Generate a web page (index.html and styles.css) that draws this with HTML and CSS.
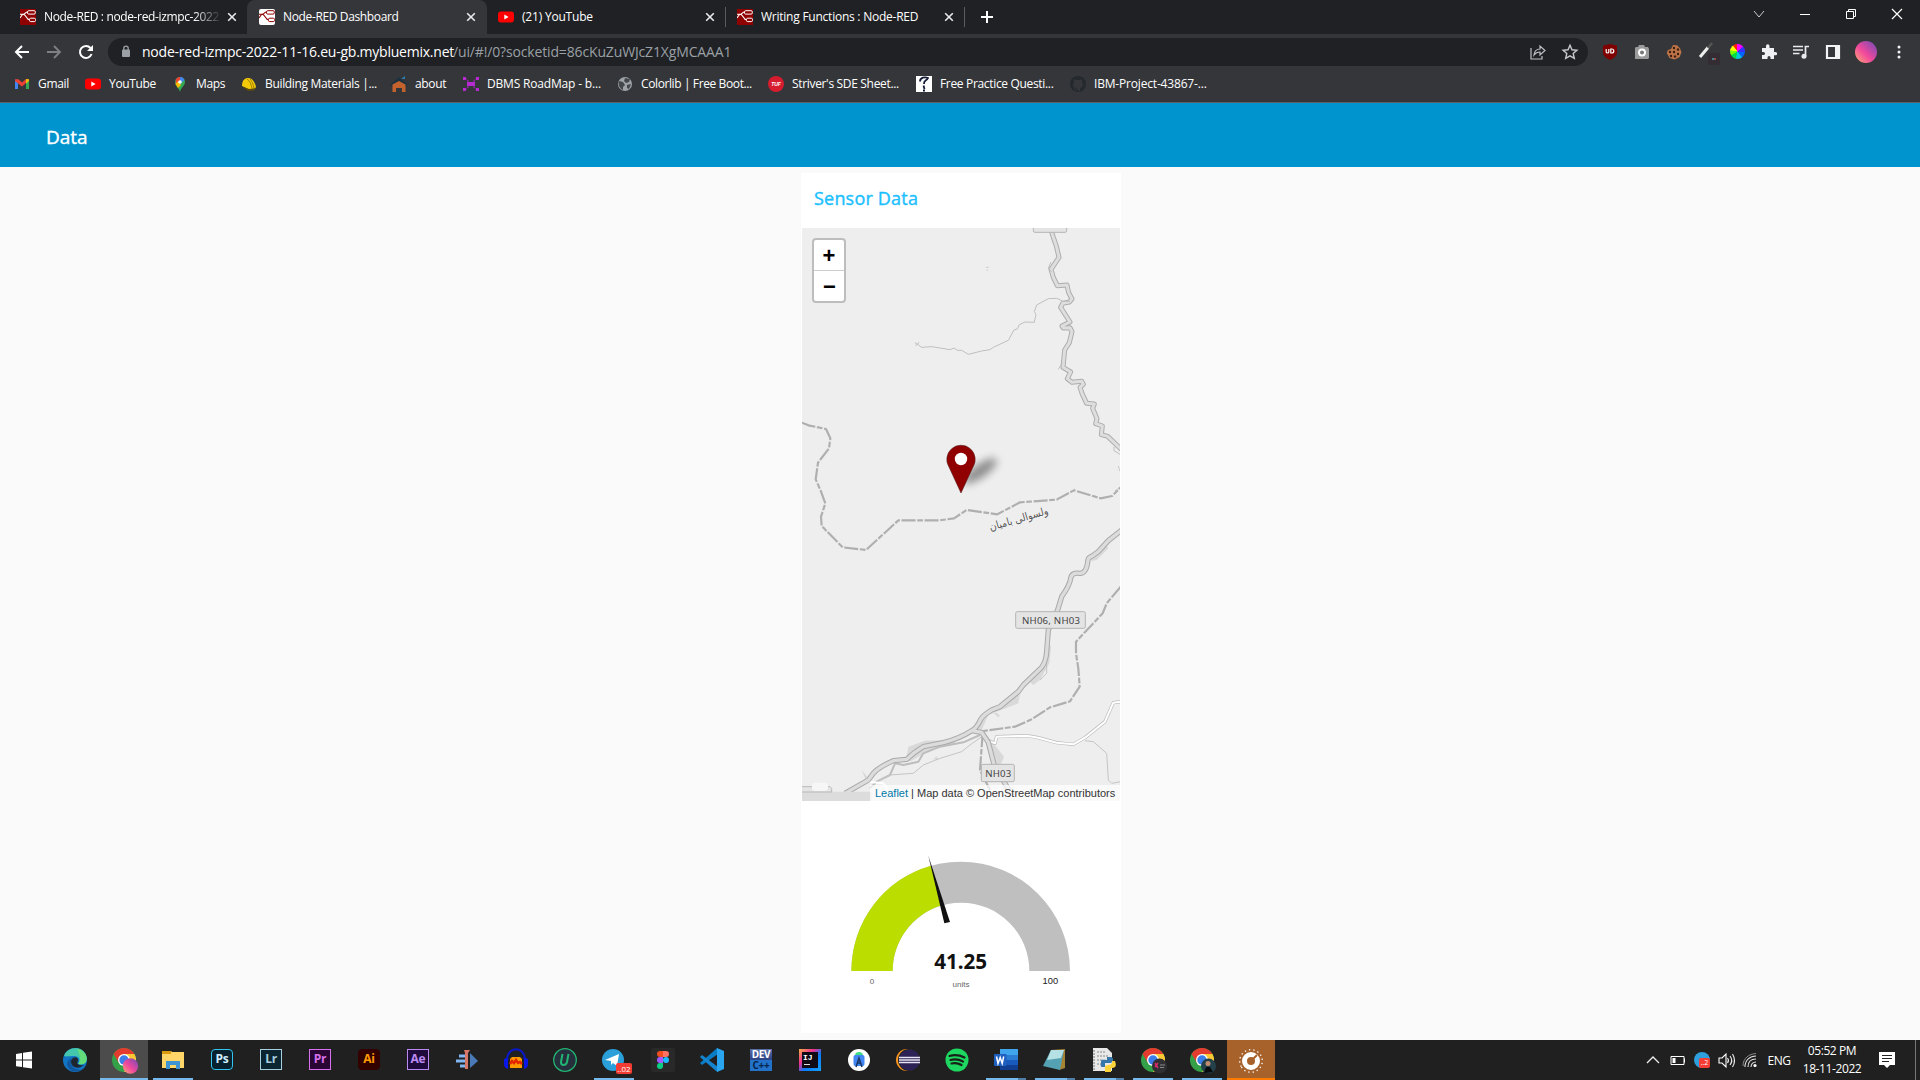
FILE: index.html
```html
<!DOCTYPE html>
<html lang="en">
<head>
<meta charset="utf-8">
<title>Node-RED Dashboard</title>
<link rel="stylesheet" href="styles.css">
</head>
<body>
<svg class="defs" aria-hidden="true">
  <symbol id="nodered" viewBox="0 0 16 16">
    <path d="M0 5.2h3.2c2 0 2.2-2.2 4.3-2.2M3 5.2c3.6 0 3 5.600 6.500 5.600M0 9l2.500-3.500" fill="none" stroke="currentColor" stroke-width="1.100"/>
    <rect x="7.500" y="1.700" width="7.800" height="3.400" rx="1.200" fill="none" stroke="currentColor"/>
    <rect x="9.500" y="9.200" width="6" height="3.400" rx="1.200" fill="none" stroke="currentColor"/>
  </symbol>
  <symbol id="youtube" viewBox="0 0 16 16"><rect y="2.500" width="16" height="11" rx="3" fill="#f00"/><path d="M6.300 5.500v5l4.300-2.500z" fill="#fff"/></symbol>
  <symbol id="close" viewBox="0 0 16 16"><path d="M4.200 4.200l7.600 7.600M11.800 4.200l-7.600 7.600" stroke="#e8eaed" stroke-width="1.600"/></symbol>
  <symbol id="chrome" viewBox="0 0 24 24">
    <circle cx="12" cy="12" r="12" fill="#34a047"/>
    <path d="M12 6h10.400A12 12 0 0 1 12 24l5.200-9z" fill="#fcc934"/>
    <path d="M1.600 6A12 12 0 0 1 22.400 6H12L7 15z" fill="#e33b2e"/>
    <circle cx="12" cy="12" r="6" fill="#fff"/><circle cx="12" cy="12" r="4.700" fill="#3b7de9"/>
  </symbol>
  <linearGradient id="pink" x1="0" y1="1" x2="1" y2="0"><stop offset="0" stop-color="#ffab72"/><stop offset=".45" stop-color="#f0489c"/><stop offset="1" stop-color="#6a4bb8"/></linearGradient>
</svg>

<header class="tabstrip">
  <div class="tab first"><svg class="fav red"><use href="#nodered"/></svg><span class="title fade">Node-RED : node-red-izmpc-2022</span><svg class="x"><use href="#close"/></svg></div>
  <div class="tab active"><svg class="fav white"><use href="#nodered"/></svg><span class="title">Node-RED Dashboard</span><svg class="x"><use href="#close"/></svg></div>
  <div class="tab third"><svg class="fav"><use href="#youtube"/></svg><span class="title yt">(21) YouTube</span><svg class="x"><use href="#close"/></svg></div>
  <div class="tab fourth"><svg class="fav red"><use href="#nodered"/></svg><span class="title wide">Writing Functions : Node-RED</span><svg class="x"><use href="#close"/></svg></div>
  <svg class="plus" viewBox="0 0 14 14"><path d="M7 1v12M1 7h12" stroke="#fff" stroke-width="2"/></svg>
  <div class="winctl">
    <svg viewBox="0 0 12 12"><path d="M1 3l5 6 5-6" fill="none" stroke="#ccc"/></svg>
    <svg viewBox="0 0 12 12"><path d="M1 6.500h10" stroke="#fff"/></svg>
    <svg viewBox="0 0 12 12"><path d="M1.500 3.500h7v7h-7zM3.500 3.500v-2h7v7h-2" fill="none" stroke="#fff"/></svg>
    <svg viewBox="0 0 12 12"><path d="M1 1l10 10M11 1L1 11" stroke="#fff" stroke-width="1.200"/></svg>
  </div>
</header>

<div class="toolbar">
  <nav class="nav">
    <svg viewBox="0 0 16 16"><path d="M15 8H2M8 2L2 8l6 6" fill="none" stroke="#fff" stroke-width="2"/></svg>
    <svg viewBox="0 0 16 16"><path d="M1 8h13M8 2l6 6-6 6" fill="none" stroke="#7f8084" stroke-width="1.800"/></svg>
    <svg viewBox="0 0 16 16"><path d="M13.600 10A6 6 0 1 1 12.500 4" fill="none" stroke="#fff" stroke-width="2"/><path d="M15 1v6H9z" fill="#fff"/></svg>
  </nav>
  <div class="omnibox">
    <svg class="lock" viewBox="0 0 10 13"><rect x="1" y="4.500" width="8" height="7.500" rx="1" fill="#9aa0a6"/><path d="M2.800 5V3.300a2.200 2.200 0 0 1 4.400 0V5" fill="none" stroke="#9aa0a6" stroke-width="1.300"/></svg>
    <span class="host">node-red-izmpc-2022-11-16.eu-gb.mybluemix.net</span><span class="path">/ui/#!/0?socketid=86cKuZuWJcZ1XgMCAAA1</span>
    <svg class="share" viewBox="0 0 16 16"><path d="M1 4v11h11v-3M4 11c.5-4 3-6 6-6V2l5 4.500L10 11V8c-3 0-4.500 1-6 3z" fill="none" stroke="#bdc1c6" stroke-width="1.200"/></svg>
    <svg class="star" viewBox="0 0 16 16"><path d="M8 1.300l2 4.500 4.900.5-3.700 3.200 1.100 4.900L8 11.800l-4.300 2.600 1.100-4.900L1.100 6.300 6 5.800z" fill="none" stroke="#c6c9cd" stroke-width="1.400"/></svg>
  </div>
  <div class="ext">
    <svg viewBox="0 0 16 16"><path d="M8 0l7 1.800V8c0 4-3 6-7 8-4-2-7-4-7-8V1.800z" fill="#800000"/><path d="M4.200 5v3c0 1.300 2.600 1.300 2.600 0V5M8.800 5v4h1a1.900 1.900 0 0 0 0-4z" fill="none" stroke="#fff" stroke-width="1.200"/></svg>
    <svg viewBox="0 0 16 16"><path d="M2 3h2l1-2h5l1 2h3l1 2v9l-1 1H1V4z" fill="#9b9b9b"/><circle cx="8" cy="8.500" r="3" fill="#777" stroke="#fff" stroke-width="2"/></svg>
    <svg viewBox="0 0 16 16"><path d="M7 1l4 .2 3 3 1.500 4-2 5-5 2.300-5-1.500L.7 9 2 6l3-1z" fill="#bd7348"/><g fill="#3b1e11"><circle cx="8" cy="4" r="1.200"/><circle cx="12" cy="5.500" r="1.200"/><circle cx="4" cy="8" r="1.200"/><circle cx="8" cy="8" r="1.200"/><circle cx="12" cy="10" r="1.200"/><circle cx="5" cy="12" r="1.200"/><circle cx="9" cy="12.500" r="1.200"/></g></svg>
    <svg class="picker" viewBox="0 0 22 24"><path d="M2 14L10 4.500" stroke="#eee" stroke-width="3"/><path d="M10 5l4-5" stroke="#555" stroke-width="2.500"/><rect x="10" y="10" width="12" height="12" rx="2" fill="#332d33"/><path d="M14 16h2" stroke="#5de"/><path d="M16 16h2" stroke="#f66"/></svg>
    <i class="wheel"></i>
    <svg viewBox="0 0 16 16"><path d="M1 4h4V2a1.700 1.700 0 0 1 3.500 0v2H13v4h1.500a1.600 1.600 0 0 1 0 3.300H13V15H9.500v-1.500a1.500 1.500 0 0 0-3 0V15H1v-4h1.500a1.500 1.500 0 0 0 0-3H1z" fill="#eef0f3"/></svg>
    <svg viewBox="0 0 16 16"><path d="M0 2.500h10M0 6h10M0 9.500h6.500M12.500 12V2.500H16" fill="none" stroke="#e8eaed" stroke-width="1.700"/><circle cx="11" cy="12.200" r="2.500" fill="#e8eaed"/></svg>
    <svg viewBox="0 0 16 16"><path d="M2 2h12v12H2z" fill="none" stroke="#f1f3f4" stroke-width="2.200"/><path d="M10 2h4v12h-4z" fill="#f1f3f4"/></svg>
    <svg class="avatar" viewBox="0 0 22 22"><circle cx="11" cy="11" r="11" fill="url(#pink)"/></svg>
    <svg viewBox="0 0 16 16"><g fill="#f1f3f4"><circle cx="8" cy="3" r="1.500"/><circle cx="8" cy="8" r="1.500"/><circle cx="8" cy="13" r="1.500"/></g></svg>
  </div>
</div>

<nav class="bookmarks">
  <a><svg viewBox="0 0 16 16"><path d="M1 3v10h3V7z" fill="#4285f4"/><path d="M12 7v6h3V3z" fill="#34a853"/><path d="M1 3.500l3-.5 4 3.500L12 3v4l-4 3.500L1 5z" fill="#ea4335"/><path d="M12 3l3 .2V5l-3 2.500z" fill="#fbbc04"/></svg><span>Gmail</span></a>
  <a><svg><use href="#youtube"/></svg><span>YouTube</span></a>
  <a><svg viewBox="0 0 16 16"><path d="M3 6a5 5 0 0 1 10 0c0 4-4 5-5 10-1-4-5-6-5-10z" fill="#34a853"/><path d="M3.500 8L11 2A5 5 0 0 0 4 3z" fill="#ea4335"/><path d="M8 1a5 5 0 0 1 4.500 3L8 8z" fill="#4285f4"/><path d="M3.500 8L6 5l3 4-3 3z" fill="#fbbc04"/><circle cx="8" cy="6" r="1.800" fill="#fff"/></svg><span>Maps</span></a>
  <a><svg viewBox="0 0 16 16"><path d="M1 10C1 4 4 2 7 2c5 0 7 5 8 9l-2 3-6-1z" fill="#f5cb08"/><path d="M0 10l8 3 7-1-2 2.500-6 .5z" fill="#5b4b10"/><path d="M6 3c3 2 4 5 5 9M9 3c2 2 3 5 4 9" fill="none" stroke="#a08000"/></svg><span>Building Materials |...</span></a>
  <a><svg viewBox="0 0 16 16"><path d="M0 8l8-7 8 7v2H0z" fill="#1c323f"/><path d="M1.500 8.500L8 5l6.500 3.500V16h-3.500v-4H5v4H1.500z" fill="#c3622d"/><path d="M10 3l4-3v3z" fill="#2c7db0"/></svg><span>about</span></a>
  <a><svg viewBox="0 0 16 16"><path d="M2 2l4 4M14 2l-4 4M2 14l4-4M14 14l-4-4" stroke="#8e2ba3" stroke-width="1.500" stroke-dasharray="2 1"/><path d="M4 6h8v4H4zM0 1h3v3H0zM13 1h3v3h-3zM0 12h3v3H0zM13 12h3v3h-3z" fill="#b52bd0"/></svg><span class="loose">DBMS RoadMap - b...</span></a>
  <a><svg viewBox="0 0 16 16"><circle cx="8" cy="8" r="7" fill="#9ea3a8"/><path d="M2 5l4 1 2 3-2 2v3C3 13 1 9 2 5zM8 2l5 1-1 3-3 1-2-2zM10 9l4-1-2 5-2-1z" fill="#44474b"/></svg><span class="tight">Colorlib | Free Boot...</span></a>
  <a><svg viewBox="0 0 16 16"><circle cx="8" cy="8" r="8" fill="#d71c2f"/><text x="8" y="10" class="tuf">TUF</text></svg><span>Striver's SDE Sheet...</span></a>
  <a><svg viewBox="0 0 16 16"><path d="M0 0h16v16H0z" fill="#fff"/><path d="M4 5.500c0-4 5-5 8-3.500-1 3-4.500 2-4 6M7.500 9.500L8.500 13M7 14.500h2" fill="none" stroke="#151b36" stroke-width="1.800"/></svg><span>Free Practice Questi...</span></a>
  <a><svg viewBox="0 0 16 16"><circle cx="8" cy="8" r="8" fill="#24292e"/><path d="M6 16v-3c-2 0-2-2-3-2M6 12c-4-1-3-4-2-6V3l2.500 1h3L12 3v3c1 2 2 5-2 6v4z" fill="#35363a"/></svg><span class="loose">IBM-Project-43867-...</span></a>
</nav>

<div class="appbar"><h1>Data</h1></div>

<main class="page">
  <section class="card">
    <h2>Sensor Data</h2>
    <div class="map">
      <svg class="tiles" viewBox="0 0 318 573">
        <rect width="318" height="573" fill="#eee"/>
        <g transform="translate(-12 -68) scale(.33333)" fill="none" stroke-linejoin="round">
          <path stroke="#adadad" stroke-width="15" d="M783 210L790 232 799 258 807 292 783 328 790 352 802 377 831 375 836 398 846 417 838 426 818 430 812 442 840 486 816 498 820 504 840 503 846 515 838 548 824 570 819 622 842 636 832 656 846 667 875 664 880 673 870 682 876 700 890 730 913 732 908 745 921 776 917 791 937 798 934 824 953 829 1000 874"/>
          <path stroke="#dedede" stroke-width="9" d="M783 210L790 232 799 258 807 292 783 328 790 352 802 377 831 375 836 398 846 417 838 426 818 430 812 442 840 486 816 498 820 504 840 503 846 515 838 548 824 570 819 622 842 636 832 656 846 667 875 664 880 673 870 682 876 700 890 730 913 732 908 745 921 776 917 791 937 798 934 824 953 829 1000 874"/>
          <path stroke="#bfbfbf" stroke-width="3" d="M840 424L820 424 800 415 775 416 740 435 733 455 738 463 733 487 705 486 688 494 682 507 672 510 655 541 610 562 600 569 575 573 535 583 515 571 502 571 492 564 480 569 425 560 395 562 375 548M376 557l12-10M783 306l-8 18 10 12M805 628l12-20M972 860l0 12 20 12"/>
          <path stroke="#c9c9c9" stroke-width="3" d="M588 322l8 0M590 331l4-1M985 918l5 16M850 990l4-3M975 992l15-8"/>
          <path stroke="#afafaf" stroke-width="6.500" stroke-dasharray="42 5 17 5" d="M36 788L55 796 108 807 121 835 117 865 84 908 77 958 92 992 106 1030 93 1070 95 1098 158 1162 228 1170 325 1081 450 1081 492 1075 530 1050 622 1063 690 1027 800 1019 852 991 932 1015 966 1008 992 982"/>
          <path d="M730 200v12q0 5 5 5h90q5 0 5-5v-12z" fill="#e4e4e4" stroke="#b5b5b5" stroke-width="3"/>
        </g>
        <g transform="translate(-12 252) scale(.33333)" fill="none" stroke-linejoin="round">
          <path fill="#d9d9d9" d="M350 830l5-30 50-18 75-2 20 10-80 20-60 35zM560 745l20-30 50-35 60-40-5 30-90 35-20 45zM580 765l30 25 32 40-8 20-26 15zM768 480l15 20-5 50-28 50-20 15-10-8 42-50zM610 700l12-2 8 10-5 4zM900 230l50-35 5 10-35 35-15 3zM430 838l10-10 5 12zM215 870l20 25-8 4z"/>
          <path stroke="#bdbdbd" stroke-width="6" d="M570 765L520 787 450 800 400 820 385 845 340 855 315 850 300 885 260 905 240 925"/>
          <path stroke="#c4c4c4" stroke-width="3" d="M575 770L540 795 515 815 450 835 400 855 370 880 300 885 260 905M885 782L910 785 950 820 955 900 965 910 992 905M770 540v40l-20 20"/>
          <path stroke="#afafaf" stroke-width="6.500" stroke-dasharray="42 5 17 5" d="M992 320L950 370 938 400 858 485 858 520 865 565 869 620 840 664 780 682 725 718 675 740 580 753M578 760L570 870 600 930"/>
          <path stroke="#bcbcbc" stroke-width="10" d="M992 665L970 668 945 725 885 773 850 793 800 788 745 773 710 767 620 770 615 790 595 782"/>
          <path stroke="#fff" stroke-width="6" d="M992 665L970 668 945 725 885 773 850 793 800 788 745 773 710 767 620 770 615 790 595 782M235 905l45 5 15 22"/>
          <path stroke="#a9a9a9" stroke-width="16" d="M995 150L955 182 925 215 905 229Q895 232 894 240Q890 280 870 280Q845 276 842 295Q840 315 815 350L803 390 775 450 770 515Q768 545 755 562L700 615 685 635 630 680 605 690Q580 705 572 718Q560 745 545 752Q510 775 460 788L400 800Q370 818 350 838L310 842Q265 862 250 880L235 900 165 940M545 752l30 5 20 30 18 70 45 75"/>
          <path stroke="#dcdcdc" stroke-width="10" d="M995 150L955 182 925 215 905 229Q895 232 894 240Q890 280 870 280Q845 276 842 295Q840 315 815 350L803 390 775 450 770 515Q768 545 755 562L700 615 685 635 630 680 605 690Q580 705 572 718Q560 745 545 752Q510 775 460 788L400 800Q370 818 350 838L310 842Q265 862 250 880L235 900 165 940M545 752l30 5 20 30 18 70 45 75"/>
          <path fill="#dcdcdc" d="M36 935h210v40H36z"/>
          <path fill="#e4e4e4" stroke="#b9b9b9" stroke-width="3" d="M30 920h90l5 5v11H30z"/>
          <rect x="66" y="908" width="48" height="25" rx="9" fill="#f6f6f6"/>
          <g fill="#e4e4e4" stroke="#b4b4b4" stroke-width="3"><rect x="677" y="395" width="209" height="50" rx="5"/><rect x="574" y="853" width="99" height="52" rx="5"/></g>
          <g class="shield"><text x="783" y="431" textLength="174">NH06, NH03</text><text x="625" y="890" textLength="78">NH03</text></g>
          <text class="arabic" transform="translate(689 127) rotate(-16)" textLength="182" lengthAdjust="spacingAndGlyphs">ولسوالی بامیان</text>
        </g>
        <g class="marker">
          <ellipse class="shadow" cx="178" cy="243" rx="20" ry="6.500" transform="rotate(-35 178 243)"/>
          <path d="M159 265L147 239a14.200 14.200 0 1 1 24 0z" fill="#900000" stroke="#5a2020" stroke-width=".6"/>
          <circle cx="159" cy="231" r="6.200" fill="#fff"/>
        </g>
      </svg>
      <div class="zoomctl"><b>+</b><b>−</b></div>
      <div class="credit"><a>Leaflet</a> | Map data © OpenStreetMap contributors</div>
    </div>
    <svg class="gauge" viewBox="36 3 954 693">
      <path d="M184 513A328 328 0 0 1 840 513H718A205 205 0 0 0 308 513z" fill="#bfbfbf"/>
      <path d="M184 513A328 328 0 0 1 423 197L456 316A205 205 0 0 0 308 513z" fill="#bd0"/>
      <path d="M415 167L480 366 463 370z" fill="#111"/>
      <text class="value" x="512" y="507" textLength="158">41.25</text>
      <text class="lim" x="246" y="552">0</text>
      <text class="lim max" x="781" y="552">100</text>
      <text class="lim" x="513" y="560">units</text>
    </svg>
  </section>
</main>

<footer class="taskbar">
  <div class="apps">
    <i class="start"><svg viewBox="0 0 24 24"><path d="M4 6l6-1v6.500H4zM11 4.800l9-1.300v8h-9zM4 12.500h6V19l-6-.8zM11 12.500h9v8l-9-1.300z" fill="#fff"/></svg></i>
    <i><svg viewBox="0 0 24 24"><circle cx="12" cy="12" r="12" fill="#1275c4"/><path d="M1 8C4-1 17-3 22 5c3 5 2 10-3 11h-4c3-4 1-8-4-8-4 0-8 1-10 0z" fill="#43c6ad"/><path d="M14 1c7 1 11 7 9.500 12-1 3-4 4-8.500 3 3-3 3-8-1-15z" fill="#62dd7a"/><path d="M8 13c1-5 8-5 7 0-2 3 1 5 6 4-4 4-13 4-13-4z" fill="#1f2630"/><path d="M8 13c-1 6 5 10 11 8-6 5-14 2-15-5 0-3 2-5 5-6z" fill="#1057a0"/></svg></i>
    <i class="current"><svg class="big" viewBox="0 0 26 26"><use href="#chrome" width="24" height="24"/><circle cx="18.500" cy="18" r="7.700" fill="url(#pink)"/></svg></i>
    <i class="run"><svg viewBox="0 0 24 24"><path d="M1 3h9l1 1h12v16H1z" fill="#ffd667"/><path d="M1 3h9v3H1z" fill="#d99c10"/><path d="M5 21v-8h14v8h-4v-4H9v4z" fill="#3f94d4"/></svg></i>
    <i><b class="ad ps">Ps</b></i><i><b class="ad lr">Lr</b></i><i><b class="ad pr">Pr</b></i><i><b class="ad ai">Ai</b></i><i><b class="ad ae">Ae</b></i>
    <i><svg viewBox="0 0 24 24"><path d="M4 8h6M1 13h9M5 18h5" stroke="#80b5f2" stroke-width="3"/><path d="M15 5l8 8-8 7z" fill="#4a7ab8"/><path d="M9 2h6l-2 3v16h-3V5z" fill="#d87769"/></svg></i>
    <i><svg viewBox="0 0 24 24"><path d="M3 14C2-3 22-3 21 14" fill="none" stroke="#0a18c8" stroke-width="2"/><path d="M6 20V11l2-2h8l2 2v9z" fill="#fa9c00"/><path d="M6 16l2-3 2 2 2-3 2 3 2-1 2 2" fill="none" stroke="#e42600" stroke-width="2.500"/><path d="M0 11q4-2 4 0v10q-4-1-4-5zM24 11q-4-2-4 0v10q4-1 4-5z" fill="#0918e8"/></svg></i>
    <i><svg viewBox="0 0 24 24"><circle cx="12" cy="12" r="11.300" fill="#25303c" stroke="#22b573" stroke-width="1.300"/><path d="M9.500 6L8 14c-.5 4 5 4 6 0l1.500-8" fill="none" stroke="#22b573" stroke-width="2"/></svg></i>
    <i class="run tele"><svg viewBox="0 0 24 24"><circle cx="11" cy="12" r="11" fill="#2b9fda"/><path d="M3 12l14-6-2 12-4-3-2 2v-4z" fill="#fff"/></svg><em>..02</em></i>
    <i><svg viewBox="0 0 24 24"><rect width="24" height="24" rx="2" fill="#292929"/><path d="M9 3h3v6H9a3 3 0 0 1 0-6z" fill="#f24e1e"/><path d="M12 3h3a3 3 0 0 1 0 6h-3z" fill="#ff7262"/><path d="M9 9h3v6H9a3 3 0 0 1 0-6z" fill="#a259ff"/><circle cx="15" cy="12" r="3" fill="#1abcfe"/><path d="M9 15h3v3a3 3 0 1 1-3-3z" fill="#0acf83"/></svg></i>
    <i><svg viewBox="0 0 24 24"><path d="M17 0l-1 1L0 15l2 2L18 6z" fill="#0a7cc4"/><path d="M0 9l2-2 16 12v5L16 23z" fill="#1685cf"/><path d="M17 0l7 3v18l-7 3z" fill="#2aa6f1"/></svg></i>
    <i><b class="dev"><u>DEV</u><u>C++</u></b></i>
    <i><b class="ij"><u>IJ</u></b></i>
    <i><svg viewBox="0 0 24 24"><circle cx="12" cy="12" r="11" fill="#fff"/><path d="M8 8a4 4 0 0 1 8 0z" fill="#3ddc84"/><rect x="6.500" y="7" width="11" height="11" rx="2" fill="#4285f4"/><path d="M9 19l3-9 3 9M10 15h4" fill="none" stroke="#173662" stroke-width="1.500"/></svg></i>
    <i><svg viewBox="0 0 24 24"><circle cx="11" cy="12" r="11" fill="#f7941e"/><circle cx="13" cy="12" r="11" fill="#222"/><circle cx="13.500" cy="12" r="10.500" fill="#2c2255"/><path d="M3 9.500h21M3 12h21M3 14.500h21" stroke="#e6e3f2" stroke-width="1.400"/></svg></i>
    <i><svg viewBox="0 0 24 24"><circle cx="12" cy="12" r="11.500" fill="#1ed760"/><path d="M4.500 8c5-1.500 10-1 15 1.500M5.500 12c4-1 8.500-.7 12.500 1.500M6.500 15.500c4-.8 7-.3 10 1.500" fill="none" stroke="#182018" stroke-width="2.200" stroke-linecap="round"/></svg></i>
    <i class="run multi"><svg viewBox="0 0 24 24"><path d="M6 1h18v6H6z" fill="#41a5ee"/><path d="M6 7h18v5H6z" fill="#2b7cd3"/><path d="M6 12h18v5H6z" fill="#185abd"/><path d="M6 17h18v5H6z" fill="#103f91"/><rect y="6" width="12.500" height="12" rx="1" fill="#1f5fc0"/><path d="M2.500 8.500l1.500 7 2.200-6 2 6 1.500-7" fill="none" stroke="#fff" stroke-width="1.500"/></svg></i>
    <i class="run multi"><svg viewBox="0 0 24 24"><path d="M8 2l14-1v19l-6 2z" fill="#a58335"/><path d="M8 2h13l-4 20L0 18z" fill="#54a1b3"/><path d="M8 2h13l-3 8L4 12z" fill="#b5e1e4"/></svg></i>
    <i class="run multi"><svg viewBox="0 0 24 24"><path d="M1 0h14l5 5v18H1z" fill="#e8e8e8"/><path d="M5 4h9M5 8h12M5 12h5M5 16h4M2 2v20" stroke="#888" stroke-width="1.200" stroke-dasharray="2 1"/><path d="M9 14c0-3 2-2 6-2V9h4c3 0 3 6-1 6h-5v4h-3c-2 0-1-3-1-5z" fill="#3776ab"/><path d="M13 24v-5c0-3 6-1 7-4v-2h3c1 3 2 7-3 7h-1v4z" fill="#ffd43b"/></svg></i>
    <i class="run"><svg class="big" viewBox="0 0 26 26"><use href="#chrome" width="24" height="24"/><circle cx="18.500" cy="18" r="7.500" fill="#303033"/><path d="M14 15l3 5M17 15l-3 4" stroke="#d92b68" stroke-width="1.500"/><path d="M19 17h5M19 19.500h4" stroke="#888"/></svg></i>
    <i class="run"><svg class="big" viewBox="0 0 26 26"><use href="#chrome" width="24" height="24"/><circle cx="18.500" cy="18" r="7.500" fill="#24414b"/><circle cx="18" cy="15.500" r="2.500" fill="#c18b70"/><path d="M14 25l2-6h4l3 5z" fill="#060b10"/></svg></i>
    <i class="dial"><svg viewBox="0 0 24 24"><circle cx="12" cy="13" r="6.500" fill="none" stroke="#fff" stroke-width="5"/><path d="M12 13l6-6" stroke="#a7612b" stroke-width="2"/><circle cx="12" cy="13" r="11.300" fill="none" stroke="#fff" stroke-width="1.300" stroke-dasharray="1.300 3" transform="rotate(150 12 13)"/></svg></i>
  </div>
  <div class="tray">
    <svg viewBox="0 0 16 16"><path d="M2 11l6-6 6 6" fill="none" stroke="#eee" stroke-width="1.300"/></svg>
    <svg viewBox="0 0 16 16"><path d="M1 4.500h13v8H1zM14.500 6.500v4" fill="none" stroke="#fff"/><path d="M2.500 6h3v5h-3z" fill="#fff"/></svg>
    <span class="tg"><em>..2</em></span>
    <svg viewBox="0 0 16 16"><path d="M0 6h3l4-4v13l-4-4H0z" fill="none" stroke="#fff" stroke-width="1.100"/><path d="M8.500 6q2 2.500 0 5M11 4q3.500 4.500 0 9M13.500 2q4 6.500 0 13" fill="none" stroke="#eee" stroke-width="1.100"/></svg>
    <svg viewBox="0 0 16 16"><path d="M3 15C3 8 8 4 14 4M6 15c0-5 3-8 8-8M9 15c0-3 2-5 5-5" fill="none" stroke="#ddd" stroke-width="1.100"/><path d="M1 14C1 6 7 2 14 1.500" fill="none" stroke="#888"/><circle cx="13" cy="13.500" r="1.600" fill="#fff"/></svg>
    <span class="lang">ENG</span>
    <div class="clock"><span>05:52 PM</span><span>18-11-2022</span></div>
    <svg class="note" viewBox="0 0 16 16"><path d="M0 0h16v13h-5l-3 3-3-3H0z" fill="#fff"/><path d="M3 3.500h10M3 6.500h10M3 9.500h7" stroke="#222"/></svg>
    <s></s>
  </div>
</footer>
</body>
</html>
```
FILE: styles.css
```css
* { box-sizing: border-box; }
body { margin: 0; width: 1920px; height: 1080px; overflow: hidden; display: flex; flex-direction: column; background: #fafafa; font-family: "Open Sans", "Noto Sans", sans-serif; font-size: 12px; color: #fff; }
svg { display: block; flex: none; overflow: visible; }
.defs { position: absolute; width: 0; height: 0; }
i, em { font-style: normal; }

.tabstrip { display: flex; height: 34px; background: #202124; align-items: stretch; }
.tab { display: flex; align-items: center; width: 239px; padding: 0 8px 0 12px; }
.tab.first { width: 247px; padding-left: 20px; padding-right: 7px; }
.tab.active { width: 240px; background: #35363a; border-radius: 8px 8px 0 0; }
.tab.third, .tab.fourth { padding-left: 11px; background: linear-gradient(#5b5c60, #5b5c60) right 7px / 1px 20px no-repeat; }
.fav { width: 16px; height: 16px; margin-right: 8px; }
.fav.red { background: #8f0000; color: #fff; }
.fav.white { background: #fff; color: #8f0000; border-radius: 2px; }
.title { flex: 1; overflow: hidden; white-space: nowrap; letter-spacing: -.36px; margin-top: -1px; }
.title.yt { letter-spacing: -.2px; }
.title.wide { letter-spacing: -.24px; }
.fade { margin-right: 5px; -webkit-mask-image: linear-gradient(90deg, #000 150px, transparent 178px); mask-image: linear-gradient(90deg, #000 150px, transparent 178px); }
.x { width: 16px; height: 16px; }
.plus { width: 14px; height: 14px; margin: 10px 0 0 15px; }
.winctl { display: flex; gap: 34px; margin-left: auto; padding: 8px 17px 0 0; }
.winctl svg { width: 12px; height: 12px; }

.toolbar { display: flex; height: 36px; background: #35363a; align-items: center; padding: 0 0 1px 14px; }
.nav { display: flex; gap: 16px; width: 94px; }
.nav svg { width: 16px; height: 16px; }
.omnibox { display: flex; align-items: center; width: 1480px; height: 28px; border-radius: 14px; background: #202124; padding: 0 10px 0 13px; font-size: 14px; white-space: nowrap; }
.lock { width: 10px; height: 13px; margin-right: 11px; }
.host { width: 311px; letter-spacing: -.23px; }
.path { color: #9aa0a6; letter-spacing: -.15px; }
.share { width: 16px; height: 16px; margin-left: auto; }
.star { width: 16px; height: 16px; margin-left: 16px; }
.ext { display: flex; align-items: center; gap: 16px; margin-left: 14px; }
.ext svg { width: 16px; height: 16px; }
.ext .picker { width: 22px; height: 24px; margin: 6px -6px 0 0; }
.ext .avatar { width: 22px; height: 22px; margin: 0 -2px; }
.wheel { width: 15px; height: 15px; border-radius: 50%; background: conic-gradient(#f0f 0 12%, #33f 15% 25%, #06f 28% 38%, #0cd 42% 52%, #0d4 55% 65%, #7f0 68% 76%, #ff0 79% 88%, #f20 91%); }

.bookmarks { display: grid; grid-template-columns: 71px 87px 69px 150px 72px 154px 151px 148px 154px 200px; align-items: center; height: 33px; padding: 0 0 5px 14px; background: #35363a; border-bottom: 1px solid #5f6064; }
.bookmarks a { display: flex; gap: 8px; align-items: center; white-space: nowrap; letter-spacing: -.33px; }
.bookmarks svg { width: 16px; height: 16px; }
.bookmarks .loose { letter-spacing: -.18px; }
.bookmarks .tight { letter-spacing: -.39px; }
.tuf { font: italic 700 5px "Liberation Sans", sans-serif; fill: #fff; text-anchor: middle; letter-spacing: 0; }

.appbar { height: 64px; background: #0094ce; padding: 4px 0 0 46px; display: flex; align-items: center; }
h1 { margin: 0; font-size: 19px; font-weight: 400; -webkit-text-stroke: .4px; letter-spacing: 0; }
.page { height: 873px; display: flex; justify-content: center; padding: 6px 0 7px; }
.card { width: 320px; margin-left: 2px; background: #fff; display: flex; flex-direction: column; align-items: center; }
h2 { margin: 0; width: 100%; height: 55px; padding: 0 0 4px 13px; line-height: 51px; font-size: 18px; font-weight: 400; -webkit-text-stroke: .4px; letter-spacing: .2px; color: #1bbfff; white-space: nowrap; }
.map { position: relative; width: 318px; height: 573px; overflow: hidden; }
.tiles { width: 318px; height: 573px; }
.shield text { font: 29px "Noto Sans", sans-serif; text-anchor: middle; fill: #444; stroke: none; }
.arabic { font: 33px "DejaVu Sans", sans-serif; fill: #555; stroke: #f7f7f7; stroke-width: 3px; paint-order: stroke; text-anchor: middle; }
.shadow { fill: #000; opacity: .42; filter: blur(4px); }
.zoomctl { position: absolute; left: 10px; top: 10px; width: 34px; height: 65px; border: 2px solid #bdbdbd; border-radius: 4px; background: #fff; color: #000; text-align: center; font: 700 22px/31px "Liberation Sans", sans-serif; }
.zoomctl b { display: block; height: 30px; }
.zoomctl b + b { height: 31px; border-top: 1px solid #ccc; padding-left: 1px; }
.credit { position: absolute; right: 0; bottom: 0; width: 250px; height: 16px; padding-left: 5px; background: rgba(255,255,255,.7); color: #333; font: 11px/16px "Liberation Sans", sans-serif; white-space: nowrap; }
.credit a { color: #0078a8; }
.gauge { width: 318px; height: 231px; }
.value { font: 700 62px "Noto Sans", sans-serif; fill: #111; text-anchor: middle; }
.lim { font: 24px "Liberation Sans", sans-serif; fill: #666; text-anchor: middle; }
.max { font-size: 28px; fill: #222; }

.taskbar { display: flex; justify-content: space-between; height: 40px; background: #202020; }
.apps { display: flex; gap: 1px; }
.apps i { position: relative; width: 48px; height: 40px; display: flex; align-items: center; justify-content: center; }
.apps .start { margin-right: 2px; }
.apps svg { width: 24px; height: 24px; }
.apps .big { width: 26px; height: 26px; margin: 2px 0 0 2px; }
.current { background: #4c4c4c; box-shadow: inset 0 -2px #76b9ed; }
.run { background: linear-gradient(#76b9ed, #76b9ed) center bottom / 40px 2px no-repeat; }
.multi { background: linear-gradient(90deg, #76b9ed 32px, #4f7fa8 32px) center bottom / 40px 2px no-repeat; }
.dial { background: #a7612b; box-shadow: inset 0 -2px #ff7a00; }
.ad { width: 22px; height: 21px; margin-bottom: 2px; border: 1.500px solid; text-align: center; font: 700 12px/18px "Open Sans", sans-serif; letter-spacing: -.3px; }
.ps { border-radius: 4px; background: #07222e; border-color: #31c5f0; color: #cfeefc; }
.lr { background: #0b2630; color: #a8cfe0; }
.pr { background: #2a0634; color: #d670ec; }
.ai { border-radius: 4px; background: #330000; border-color: #330000; color: #ff9a00; }
.ae { background: #1f0a3c; color: #bb8af0; }
.tele em { position: absolute; left: 26px; top: 23px; width: 16px; height: 11px; border-radius: 2px; background: #f23c34; font-size: 8px; line-height: 11px; text-align: center; }
.dev { width: 22px; height: 22px; background: linear-gradient(#5a6fa8, #2c4384 50%, #2272c9 50%); font: 700 10px/11px "Open Sans", sans-serif; text-align: center; letter-spacing: -.3px; }
u { display: block; text-decoration: none; }
.dev u + u { color: #07244c; }
.ij { width: 22px; height: 22px; padding: 3px; background: linear-gradient(135deg, #f5b045, #f02d90 35%, #087cfa 60%, #18a0f4); }
.ij u { height: 16px; background: linear-gradient(#ddd, #ddd) 2px 12px / 6px 1px no-repeat #100a14; font: 700 8px/11px "Liberation Mono", monospace; padding-left: 1px; }
.tray { display: grid; grid-template-columns: 24px 25px 24px 25px 22px 36px 70px 40px 16px; align-items: center; justify-items: center; width: 282px; margin-right: -3px; }
.tray svg { width: 16px; height: 16px; }
.tg { position: relative; width: 16px; height: 16px; border-radius: 50%; background: #2d9fdc; }
.tg em { position: absolute; left: 5px; top: 6px; width: 11px; height: 10px; border-radius: 2px; background: #f23c34; font-size: 7px; line-height: 10px; text-align: center; }
.lang { letter-spacing: -.4px; }
.clock { display: flex; flex-direction: column; align-items: center; line-height: 18px; letter-spacing: -.4px; white-space: nowrap; }
.tray s { width: 1px; height: 40px; background: #777; }
```
